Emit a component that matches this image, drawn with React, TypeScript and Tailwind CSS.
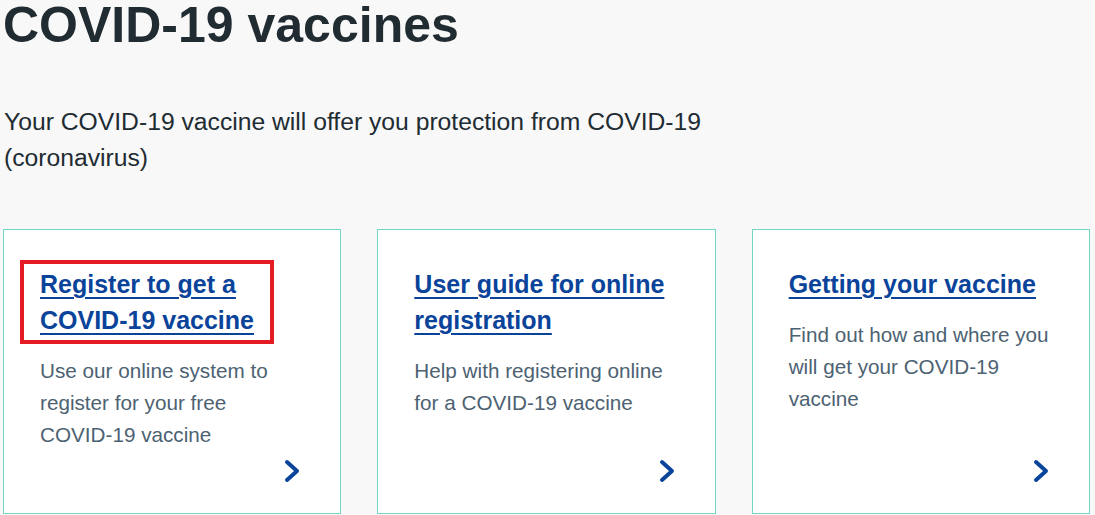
import React from "react";

type Card = {
  title: string;
  text: string;
  highlighted?: boolean;
};

const cards: Card[] = [
  {
    title: "Register to get a COVID-19 vaccine",
    text: "Use our online system to register for your free COVID-19 vaccine",
    highlighted: true,
  },
  {
    title: "User guide for online registration",
    text: "Help with registering online for a COVID-19 vaccine",
  },
  {
    title: "Getting your vaccine",
    text: "Find out how and where you will get your COVID-19 vaccine",
  },
];

const Chevron = () => (
  <svg
    className="absolute right-[40px] bottom-[30px] w-[16px] h-[24px]"
    viewBox="0 0 16 24"
    fill="none"
  >
    <path
      d="M3 3 L13 12 L3 21"
      stroke="#0a459b"
      strokeWidth="4"
      strokeLinecap="round"
      strokeLinejoin="round"
    />
  </svg>
);

const CardTitle = ({ title }: { title: string }) => (
  <h2 className="text-[25px] leading-[36px] font-bold text-[#0a439a] underline decoration-2 underline-offset-[4px]">
    {title}
  </h2>
);

const VaccineCard = ({ title, text, highlighted }: Card) => {
  return (
    <div className="relative h-[285px] bg-white border border-[#72d8c4] pt-[36px] px-[36px]">
      {highlighted ? (
        <div className="-ml-[20px] -my-[6px] w-[254px] border-4 border-[#e31b23] py-[2px] pl-[16px]">
          <CardTitle title={title} />
        </div>
      ) : (
        <CardTitle title={title} />
      )}
      <p className="mt-[17px] text-[20.7px] leading-[32px] text-[#4c6272]">{text}</p>
      <Chevron />
    </div>
  );
};

export default function App() {
  return (
    <div className="min-h-screen bg-[#f8f8f8] font-['Liberation_Sans',Arial,sans-serif] overflow-hidden">
      <h1 className="pl-[3px] text-[50px] leading-[50px] font-bold text-[#212b32]">
        COVID-19 vaccines
      </h1>
      <p className="mt-[54px] pl-[4px] max-w-[720px] text-[24.7px] leading-[36px] text-[#212b32]">
        Your COVID-19 vaccine will offer you protection from COVID-19 (coronavirus)
      </p>
      <div className="mt-[53px] grid grid-cols-3 gap-[36px] pl-[3px] pr-[5px]">
        {cards.map((card) => (
          <VaccineCard key={card.title} {...card} />
        ))}
      </div>
    </div>
  );
}
